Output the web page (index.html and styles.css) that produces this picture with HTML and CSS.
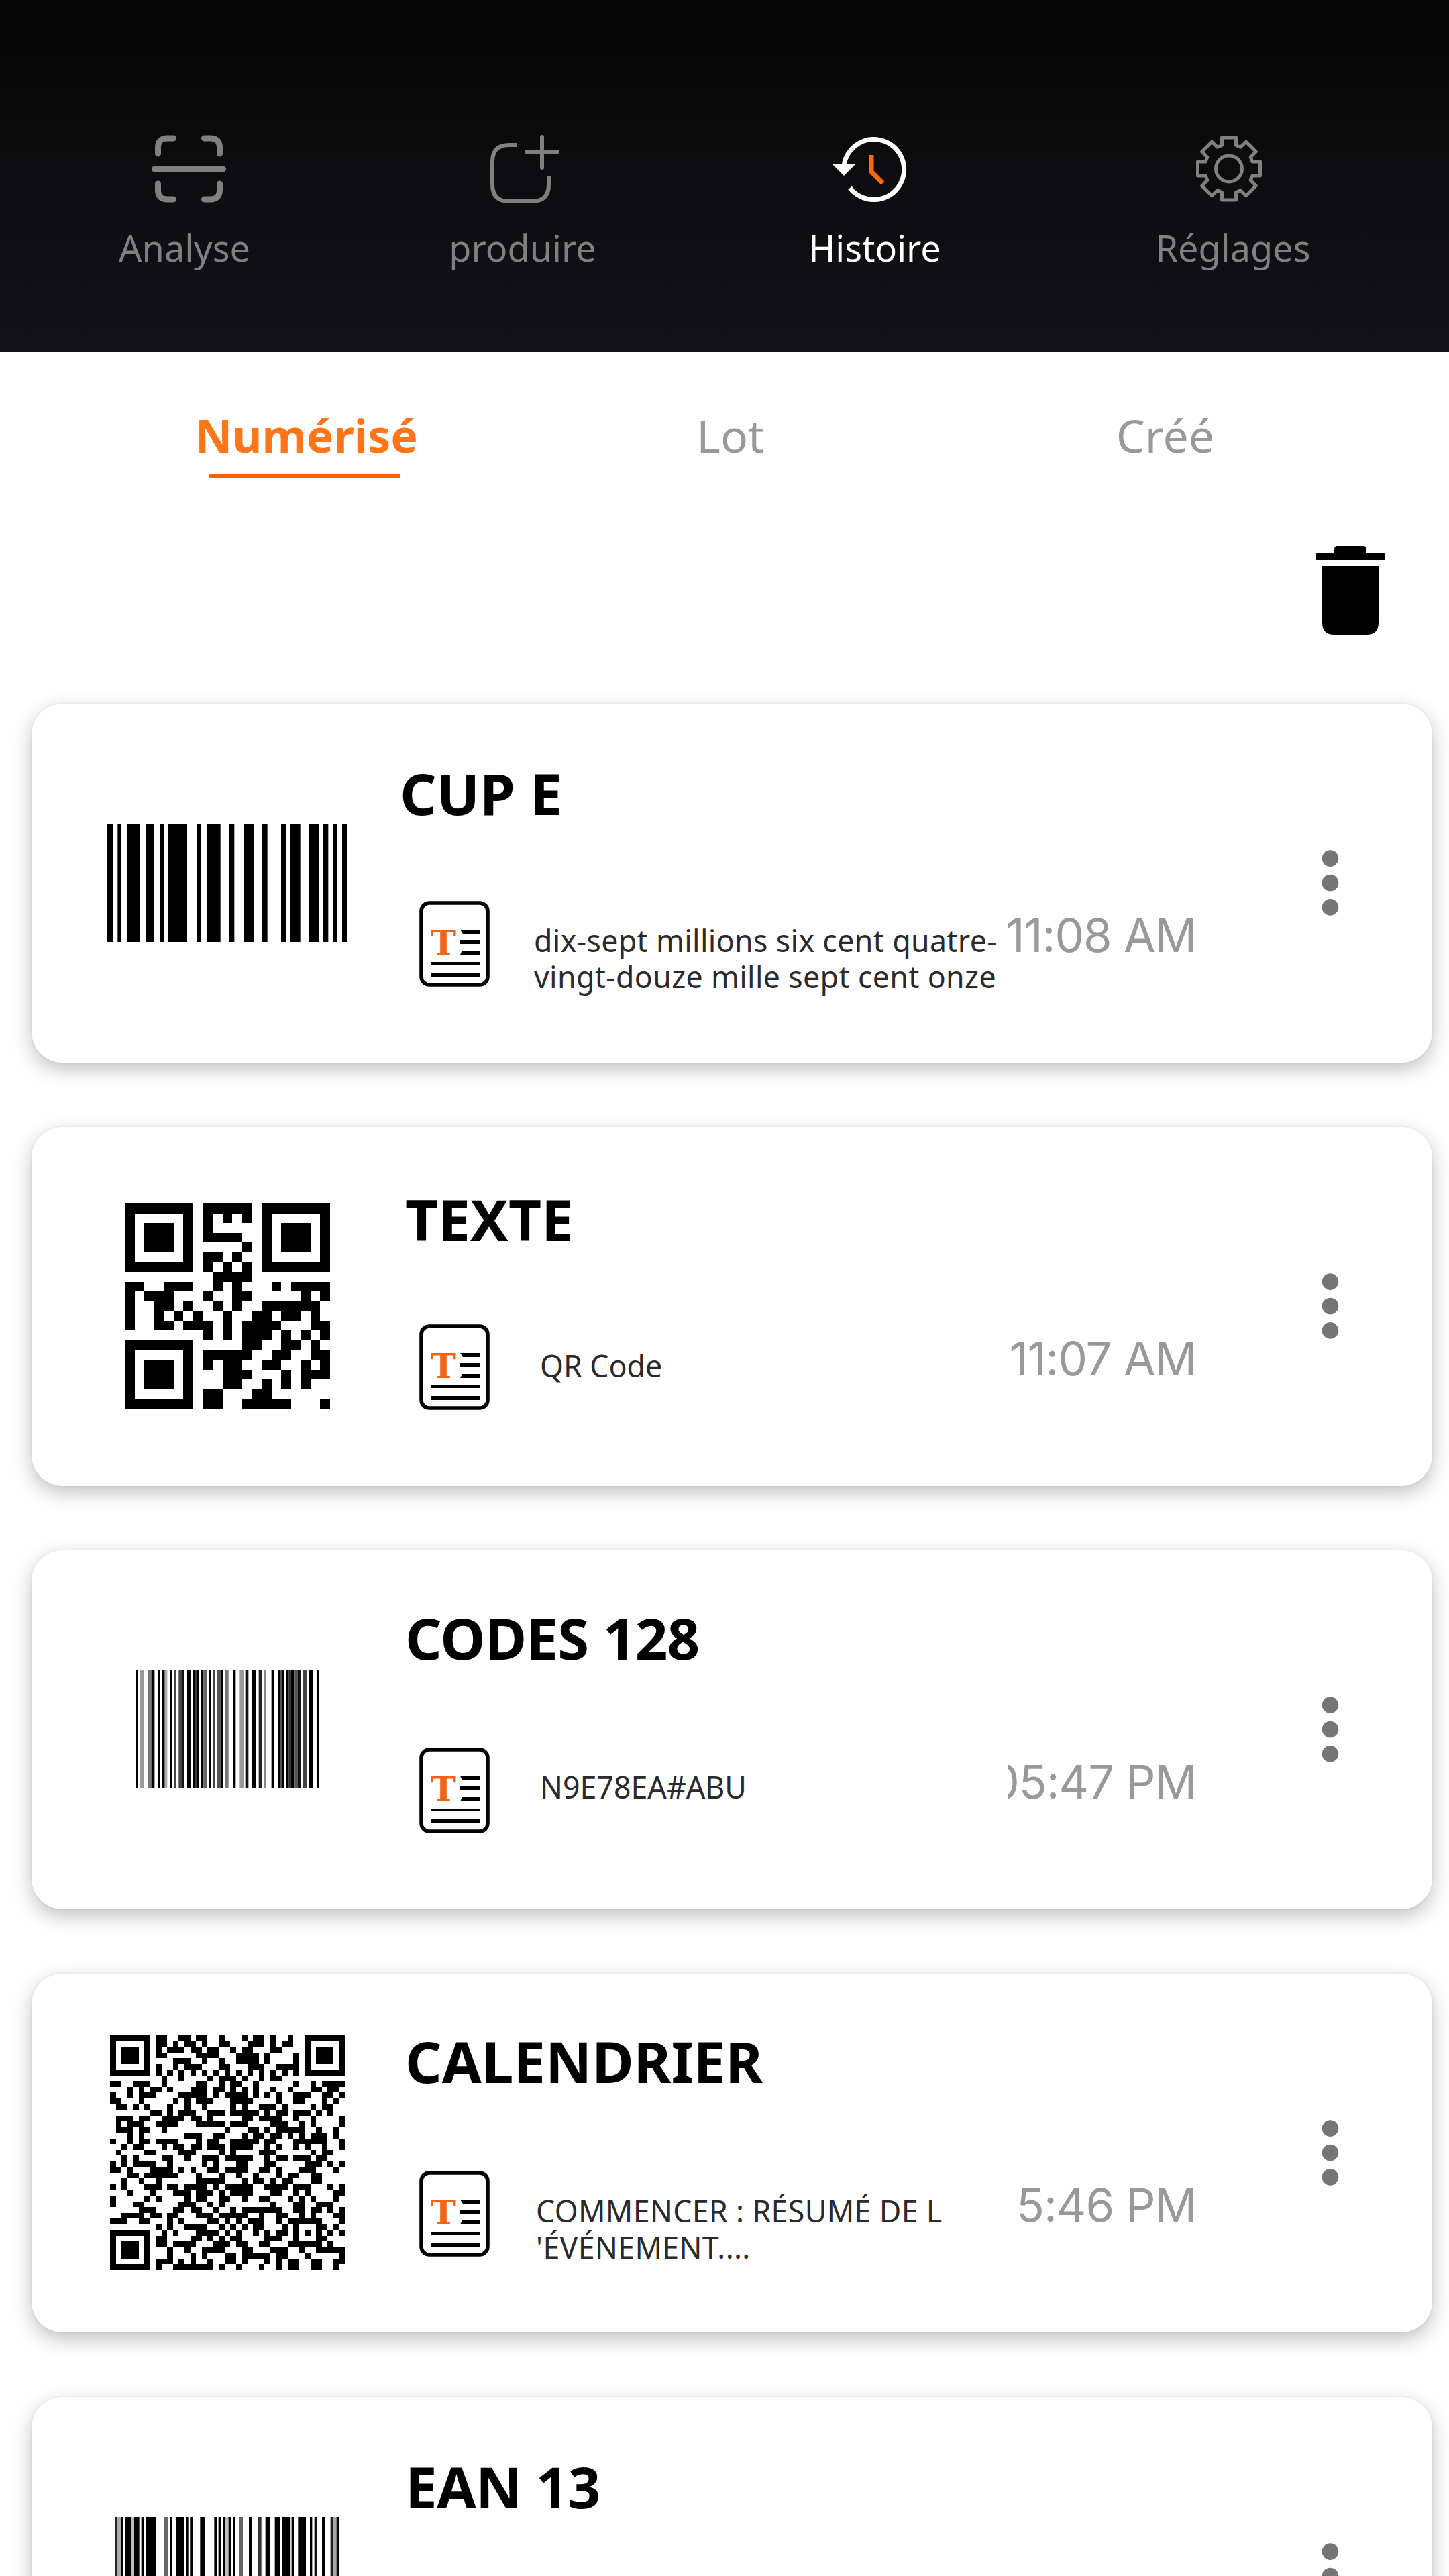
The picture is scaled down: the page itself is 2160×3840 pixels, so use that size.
FILE: index.html
```html
<!DOCTYPE html>
<html lang="fr">
<head>
    <meta charset="UTF-8">
    <meta name="viewport" content="width=device-width, initial-scale=1.0">
    <title>Histoire</title>
    <link rel="stylesheet" href="styles.css">
</head>
<body>
    <svg class="defs">
        <symbol id="doc" viewBox="0 0 105 128">
            <rect x="3" y="3" width="99" height="122" rx="12" fill="none" stroke="#000" stroke-width="5.5"/>
            <text x="36" y="80" class="doc-letter">T</text>
            <path d="M61 43h29v6H65zM61 58h29v6H61zM64 74h26v6H61z"/>
            <path d="M17 91h73v4H17zM17 107h73v6H17z"/>
        </symbol>
        <symbol id="dots" viewBox="0 0 26 98">
            <circle cx="13" cy="12.6" r="12.3"/>
            <circle cx="13" cy="49" r="12.3"/>
            <circle cx="13" cy="85.4" r="12.3"/>
        </symbol>
    </svg>

    <nav class="topbar">
        <a class="nav-item">
            <svg class="nav-icon" viewBox="205 197 140 110" stroke-width="9">
                <path d="M230.5 252h102M235.5 229v-9q0-14 14-14h9M304.5 206h9q14 0 14 14v9M235.5 274v9q0 14 14 14h9M304.5 297h9q14 0 14-14v-9"/>
            </svg>
            <span>Analyse</span>
        </a>
        <a class="nav-item">
            <svg class="nav-icon" viewBox="709 197 140 110" stroke-width="6">
                <path stroke-linecap="butt" d="M771 216h-12q-25 0-25 25v34q0 25 25 25h34q25 0 25-25v-12"/>
                <path d="M808 204v46M785 226h46"/>
            </svg>
            <span>produire</span>
        </a>
        <a class="nav-item active">
            <svg class="nav-icon" viewBox="1234 197 140 110" stroke-width="7">
                <path stroke-linecap="butt" d="M1258 247A45 45 0 1 1 1267 280"/>
                <path class="fill" d="M1241 245h34l-17 17z"/>
                <path class="hand" d="M1299 231v25l17 17"/>
            </svg>
            <span>Histoire</span>
        </a>
        <a class="nav-item">
            <svg class="nav-icon" viewBox="-64 -54.5 140 110" stroke-width="5">
                <circle r="19.5"/>
                <path stroke-linejoin="round" d="M-10.5-35V-46.5H10.5V-35L17.3-32.2 25.5-40.3 40.3-25.5 32.2-17.3 35-10.5H46.5V10.5H35L32.2 17.3 40.3 25.5 25.5 40.3 17.3 32.2 10.5 35V46.5H-10.5V35L-17.3 32.2-25.5 40.3-40.3 25.5-32.2 17.3-35 10.5H-46.5V-10.5H-35L-32.2-17.3-40.3-25.5-25.5-40.3-17.3-32.2z"/>
            </svg>
            <span>Réglages</span>
        </a>
    </nav>

    <div class="tabs">
        <div class="tab selected">Numérisé</div>
        <div class="tab">Lot</div>
        <div class="tab last">Créé</div>
    </div>

    <div class="toolbar">
        <svg class="trash" viewBox="0 0 104 133">
            <path d="M28 11V5q0-5 5-5h38q5 0 5 5v6h26q2 0 2 2v8H0v-8q0-2 2-2z"/>
            <path d="M10 30h84v84q0 18-18 18H28q-18 0-18-18z"/>
        </svg>
    </div>

    <main class="list">
        <div class="card cup">
            <div class="code"><svg class="bars" data-bars="cup"></svg></div>
            <div class="info">
                <h2>CUP E</h2>
                <div class="detail">
                    <svg class="doc"><use href="#doc"/></svg>
                    <p>dix-sept millions six cent quatre-<br>vingt-douze mille sept cent onze</p>
                    <span class="time">11:08 AM</span>
                </div>
            </div>
            <svg class="dots"><use href="#dots"/></svg>
        </div>
        <div class="card texte">
            <div class="code"><svg class="qr small" data-qr="texte"></svg></div>
            <div class="info">
                <h2>TEXTE</h2>
                <div class="detail">
                    <svg class="doc"><use href="#doc"/></svg>
                    <p>QR Code</p>
                    <span class="time">11:07 AM</span>
                </div>
            </div>
            <svg class="dots"><use href="#dots"/></svg>
        </div>
        <div class="card codes">
            <div class="code"><svg class="bars" data-bars="code128"></svg></div>
            <div class="info">
                <h2>CODES 128</h2>
                <div class="detail">
                    <svg class="doc"><use href="#doc"/></svg>
                    <p>N9E78EA#ABU</p>
                    <span class="time clipped">05:47 PM</span>
                </div>
            </div>
            <svg class="dots"><use href="#dots"/></svg>
        </div>
        <div class="card calendrier">
            <div class="code"><svg class="qr" data-qr="calendrier"></svg></div>
            <div class="info">
                <h2>CALENDRIER</h2>
                <div class="detail">
                    <svg class="doc"><use href="#doc"/></svg>
                    <p>COMMENCER : RÉSUMÉ DE L<br>'ÉVÉNEMENT....</p>
                    <span class="time">5:46 PM</span>
                </div>
            </div>
            <svg class="dots"><use href="#dots"/></svg>
        </div>
        <div class="card ean">
            <div class="code"><svg class="bars" data-bars="ean"></svg></div>
            <div class="info">
                <h2>EAN 13</h2>
            </div>
            <svg class="dots"><use href="#dots"/></svg>
        </div>
    </main>
    <script src="codes.js"></script>
</body>
</html>
```
FILE: styles.css
```css
body {
    margin: 0;
    width: 2160px;
    height: 3840px;
    overflow: hidden;
    background-color: #fefefe;
    font-family: "Noto Sans", sans-serif;
}
.defs {
    position: absolute;
    width: 0;
    height: 0;
}
.topbar {
    display: grid;
    grid-template-columns: 550px 458px 592px 476px;
    box-sizing: border-box;
    height: 524px;
    padding-top: 197px;
    background: linear-gradient(#040404, #0d0d0f 50%, #131217);
}
.nav-item {
    display: flex;
    flex-direction: column;
    align-items: center;
    gap: 25px;
    color: #808080;
    font-size: 54px;
    line-height: 74px;
}
.nav-item.active {
    color: white;
}
.nav-icon {
    width: 140px;
    height: 110px;
    fill: none;
    stroke: currentColor;
    stroke-linecap: round;
}
.nav-icon .fill {
    fill: currentColor;
    stroke: none;
}
.nav-icon .hand {
    stroke: #ff6a00;
    stroke-linecap: butt;
}
.tabs {
    display: grid;
    grid-template-columns: 914px 350px 896px;
    box-sizing: border-box;
    height: 190px;
    padding-top: 79px;
}
.tab {
    display: flex;
    flex-direction: column;
    align-items: center;
    color: #999;
    font-size: 68px;
    line-height: 92px;
}
.tab.last {
    padding-left: 50px;
}
.tab.selected {
    color: #ff7518;
    font-weight: bold;
}
.tab.selected::after {
    content: "";
    width: 286px;
    height: 7px;
    margin: 11px 6px 0 0;
    border-radius: 3px;
    background-color: #fa6400;
}
.toolbar {
    display: flex;
    justify-content: flex-end;
    box-sizing: border-box;
    height: 335px;
    padding: 100px 95px 0 0;
}
.trash {
    width: 104px;
    height: 133px;
}
.list {
    display: flex;
    flex-direction: column;
    gap: 96px;
    padding: 0 25px 0 47px;
}
.card {
    display: grid;
    grid-template-columns: 549px 1182px 357px;
    flex-shrink: 0;
    height: 535px;
    border-radius: 46px;
    background-color: #fefefe;
    box-shadow: 0 10px 28px rgba(0, 0, 0, 0.24), 0 0 4px rgba(0, 0, 0, 0.06);
}
.code {
    display: flex;
    align-items: center;
    justify-content: center;
    padding: 0 0 2px 34px;
}
.bars {
    height: 176px;
}
.qr {
    width: 350px;
    height: 350px;
}
.qr.small {
    width: 306px;
    height: 306px;
}
h2 {
    box-sizing: border-box;
    height: 294px;
    margin: 0;
    padding: 75px 0 0 8px;
    font-size: 85.2px;
    line-height: 117px;
    color: black;
}
.cup h2 {
    padding-left: 0;
}
.texte h2 {
    padding-top: 79px;
}
.codes h2,
.calendrier h2 {
    padding-top: 72px;
}
.codes h2,
.ean h2 {
    letter-spacing: -0.8px;
}
.detail {
    display: flex;
    align-items: flex-start;
    padding-left: 29px;
}
.doc {
    flex-shrink: 0;
    width: 105px;
    height: 128px;
}
.doc-letter {
    font: 51px "DejaVu Serif", serif;
    font-weight: bold;
    text-anchor: middle;
    fill: #f26419;
}
.detail p {
    margin: 0;
    padding: 32px 0 0 66px;
    font-size: 44.7px;
    line-height: 54px;
    white-space: nowrap;
    color: #2a2a2a;
}
.cup p,
.calendrier p {
    letter-spacing: 0.35px;
}
.texte p {
    padding: 35px 0 0 75px;
}
.codes p {
    padding-left: 75px;
}
.calendrier p {
    padding: 33px 0 0 69px;
}
.time {
    display: flex;
    justify-content: flex-end;
    margin: 9px -5px 0 auto;
    font-family: Inter, sans-serif;
    font-size: 69px;
    line-height: 84px;
    letter-spacing: -1px;
    white-space: nowrap;
    color: #999;
}
.time.clipped {
    width: 281px;
    overflow: hidden;
}
.dots {
    align-self: center;
    justify-self: center;
    width: 26px;
    height: 98px;
    margin: 0 0 2px 52px;
    fill: #757575;
}
```
FILE: codes.js
```javascript
// bars: start-end, with an optional grey after the colon
const bars = {
    cup: "60-84 106-123 147-207 231-270 294-314 333-417 460-478 504-566 606-628 669-714 752-776 837-860 878-923 962-1006 1024-1048 1070-1087 1110-1134",
    code128: "66-77 87-103:#999 120-137:#777 137-151 165-177 185-197 197-208:#aaa 220-231 239-249:#444 259-274:#444 274-285:#111 297-313 321-332 332-337:#333 337-348 358-370 370-385:#666 393-404 413-422:#444 431-446:#555 446-458 468-482:#777 502-514 532-549:#999 557-571:#111 586-603 617-631:#222 640-650:#888 674-686 703-716 716-722:#555 722-732 740-752 752-760:#333 760-778 778-792:#555 792-804:#111 815-831:#444 842-860 876-887",
    ean: "65-77:#222 77-92:#aaa 92-102 112-138 138-152:#bbb 152-175 184-194 204-248 285-302:#666 311-321 338-375 384-394 402-413 447-467 510-521 529-540 548-558 558-574:#bbb 574-584 593-604 620-638:#666 665-677 707-721:#333 739-759 781-803 812-848 848-856:#ddd 856-868 885-920 938-948 958-970:#111 992-1004 1030-1040:#222 1040-1057:#aaa 1057-1068"
};

// dark modules of each row
const qr = {
    texte: [
        "0-6 8-12 14-20",
        "0 6 8 10 12 14 20",
        "0 2-4 6 8 14 16-18 20",
        "0 2-4 6 8-11 14 16-18 20",
        "0 2-4 6 12 14 16-18 20",
        "0 6 8-9 11 14 20",
        "0-6 8 10 12 14-20",
        "9-12",
        "0-1 4-6 9 11 15 17-20",
        "0 2-4 8 11-12 18 20",
        "0 3-4 6 9 11 14-19",
        "0 3 5 7 10 13-14 16-17 19",
        "0 3-4 6-8 10 12-15 19-20",
        "8 10 12-14 16 18 20",
        "0-6 12-13 16-17 19",
        "0 6 8-12 15-16 19-20",
        "0 2-4 6 8 10-11 14-15 18 20",
        "0 2-4 6 10-12 16 18-20",
        "0 2-4 6 10-11 14 16 18",
        "0 6 8-9 13-14",
        "0-6 8-9 12-16 20"
    ],
    calendrier: [
        "0-6 8-9 12-13 15-16 19 23 25-26 28 31 34-40",
        "0 6 8-9 11 13-14 16 19-20 24-26 28 30-31 34 40",
        "0 2-4 6 8 10-12 14-15 17-18 21 23-24 28-29 34 36-38 40",
        "0 2-4 6 8-9 15-18 22-25 27 32 34 36-38 40",
        "0 2-4 6 11-13 16 19 22-25 27 32 34 36-38 40",
        "0 6 8 11 13-15 19-20 24-26 29-32 34 40",
        "0-6 8 10 12 14 16 18 20 22 24 26 28 30 32 34-40",
        "9 12 17 19-21 23 26 28-29",
        "0-1 4-6 9 15-16 19 21-22 25 32 35 37-40",
        "3 5 7-8 10 14-16 18-19 21 23 25 28 31 35-36 38-39",
        "0 3 5-7 12-16 18 20-23 25 27 29 32-34 37-38 40",
        "0-1 5 11 13 15-17 21-24 29 32-33 37 39",
        "1-2 4 6 10 13 16 21 23 26-28 30 35 37-38",
        "7-8 10 12-14 17-19 21-25 27 29-30 32-34 36 38",
        "1-3 5-6 9-12 14-15 17 23-24 26-29 32 35 40",
        "1 3-5 8-11 15-19 21-23 28-30 33 35 40",
        "1-3 5-6 9 20 24-25 27 29-33 36 39",
        "3 5 13-15 18-19 23 25-26 28-29 31 33 35-37 39",
        "0 3 5-6 8-11 15 17-18 21-25 27-28 32-37 40",
        "2 4-5 9 11-12 14-15 17-19 21-24 27 29 32 34 37 40",
        "1 6-7 12-14 19 21 26-28 35 37-38",
        "2 4 9-10 13 16-18 20-24 27 29-30 32-34 36-37",
        "0 2 4-7 10 16 18 22-23 27-28 34-36 38 40",
        "0-1 3 7-10 12 14 17-18 20-23 26-27 29 33-35 39",
        "3-4 6-11 15 19 22 25 29 31-32 35-36",
        "2 5 8 15-19 23 25-26 28 30-31 35-36",
        "0 2 6-8 10-11 13-16 18 20-24 27-30 32-34 38 40",
        "3 7 11-13 15-17 19 21-24 28-29 32 34 39-40",
        "0 6 8 13 15-16 19-20 23 26-27 31 33 35 39",
        "0 4-5 12-14 17 19 28 32-33 36-38",
        "5-7 11-12 14-15 18 21 23-29 32-33 35-36 38 40",
        "2-5 7-8 10-11 15-17 19-23 26 29-30 33 35 39-40",
        "0-2 5-6 10 12 17-18 20 22 24-26 29 31-36 40",
        "8 10 13-16 19 21 23 25-26 30 32 36-37 39",
        "0-6 9 11 15-18 20 22 25 27 29-30 32 34 36 38 40",
        "0 6 8-9 14-15 17 19 21-22 27-29 32 36-37",
        "0 2-4 6 8-9 11-14 18-20 22-23 26-27 31-36 38",
        "0 2-4 6 10 13 16-19 23-24 28-30 33 36-40",
        "0 2-4 6 10 14 16 20-21 23-27 29-30 34 40",
        "0 6 8-10 12 14 17 20-21 23 27 29 31-32 35-36 39-40",
        "0-6 8 11-17 19 22 26 29 31-32 35-36 39"
    ]
};

document.querySelectorAll("[data-bars]").forEach(svg => {
    const list = bars[svg.dataset.bars].split(" ").map(item => {
        const [range, color] = item.split(":");
        const [start, end] = range.split("-").map(Number);
        return { start, end, color: color || "#000" };
    });
    const left = list[0].start;
    const width = list[list.length - 1].end - left;
    svg.setAttribute("viewBox", `${left} 0 ${width} 528`);
    svg.setAttribute("width", width / 3);
    svg.innerHTML = list.map(b => `<rect x="${b.start}" width="${b.end - b.start}" height="528" fill="${b.color}"/>`).join("");
});

document.querySelectorAll("[data-qr]").forEach(svg => {
    const rows = qr[svg.dataset.qr];
    let d = "";
    rows.forEach((row, y) => {
        row.split(" ").forEach(run => {
            const [start, end = start] = run.split("-").map(Number);
            d += `M${start} ${y}h${end - start + 1}v1H${start}z`;
        });
    });
    svg.setAttribute("viewBox", `0 0 ${rows.length} ${rows.length}`);
    svg.innerHTML = `<path d="${d}" shape-rendering="crispEdges"/>`;
});
```
